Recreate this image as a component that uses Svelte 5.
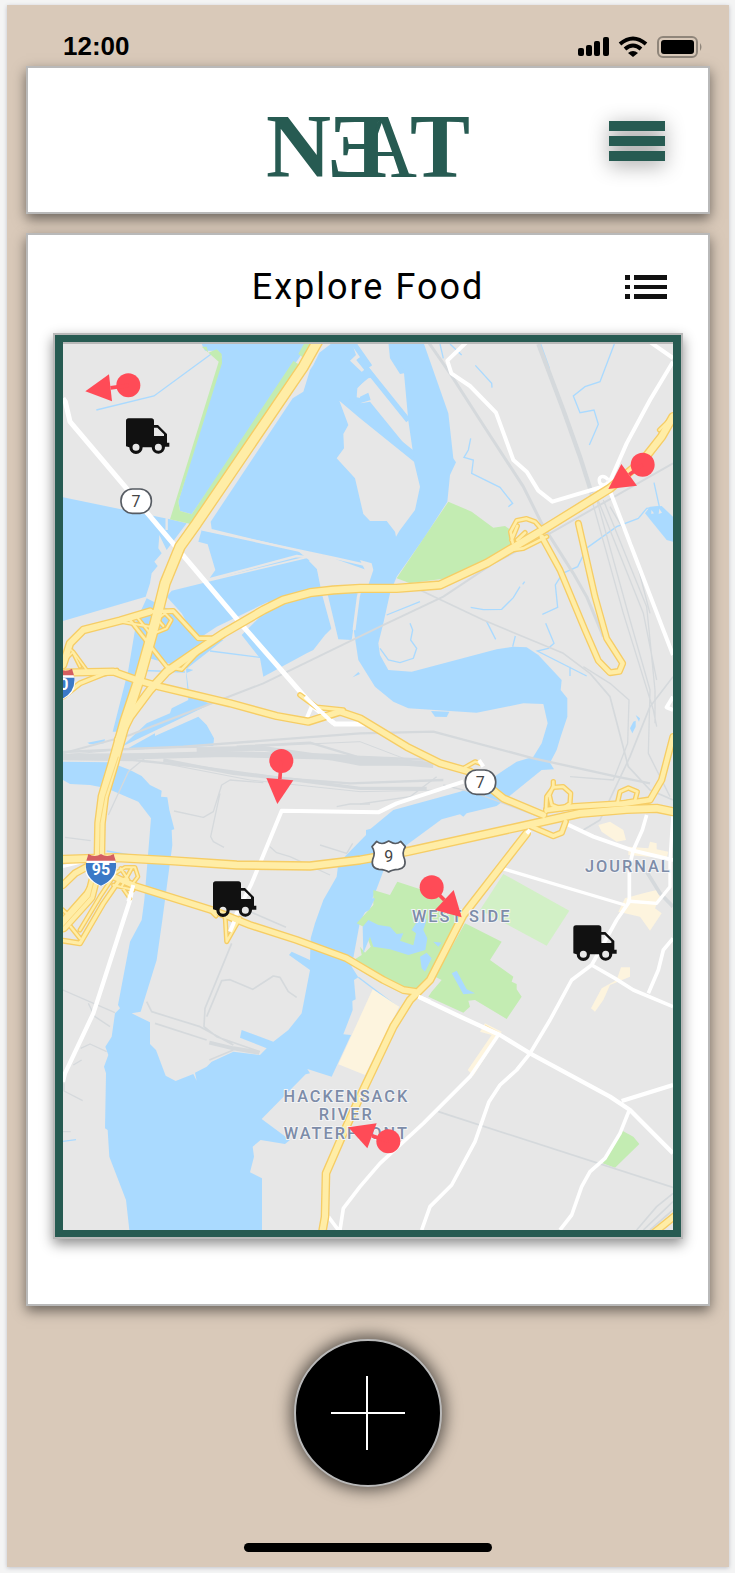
<script>
  const land = '#e7e7e7';

  // Water bodies and creeks
  const water = [
    'M39 502L360 568L410 580L350 660L328 615L325 655L335 670L313 695L323 708L305 730L300 760L287 800L39 873Z',
    'M455 42L465 62L505 62L515 80L385 515L390 543L425 553L780 36Z',
    'M790 105L808 68L850 36L1120 36L1160 150L1195 250L1210 385L1218 397L1200 435L1192 515L1125 620L1040 740L1020 790L1000 880L985 940L990 975L1015 1020L1085 1025L1340 958L1390 950L1430 952L1465 975L1535 1050L1532 1080L1552 1105L1552 1160L1532 1220L1520 1260L1500 1298L1512 1318L1475 1320L1370 1405L1340 1428L1250 1450L1240 1460L1230 1453L1175 1468L1070 1545L1005 1610L975 1690L930 1775L905 1910L925 1942L912 1950L917 2008L907 2013L908 2040L880 2113L903 2115L845 2240L772 2217L780 2230L767 2233L635 2367L720 2430L705 2442L632 2430L608 2450L612 2480L600 2527L636 2545V2700H238L228 2610L178 2480L173 2400L165 2395L168 2230L162 2210L175 2175L166 2150L185 2120L195 2050L210 2035L204 2025L220 1940L240 1835L275 1770L283 1710L303 1465L265 1415L170 1375L120 1365L60 1362L39 1350V1295L180 1297L240 1320L275 1338L300 1365L335 1382L333 1400L352 1402L358 1440L373 1498L365 1500L367 1545L337 1770L320 1890L272 2045L245 2050L300 2077V2142L318 2160L347 2237L377 2253L430 2232L440 2252L435 2228L470 2210L485 2195L550 2165L630 2175L650 2155L570 2123L575 2100L670 2135L715 2100L755 2050L780 1920L717 1875L725 1865L780 1890L782 1825L795 1780L820 1710L860 1640L865 1600L948 1515V1500L962 1496L1030 1440L1230 1385L1310 1355L1400 1295L1450 1280L1475 1240L1493 1180L1480 1122L1420 1120L1280 1148L1075 1135L1030 1115L975 1070L925 990L912 905L922 800L950 720L850 685L485 597L482 575L728 205L760 185L780 120Z',
    'M455 600L740 660L765 680L475 750L496 720L473 643L445 635Z',
    'M350 800L365 782L475 755L770 685L800 708L818 790L850 890L825 915L790 960L770 970L640 1040L630 985L575 915L630 860L655 815L500 890L440 930L395 850Z',
    'M830 780L925 790L905 930L865 928Z',
    'M290 805L260 870L235 1020L188 1205L208 1205L280 980L430 1020L408 1030L415 1110L365 1135L360 1150L290 1180L215 1250L482 1122L418 1095L408 1018L520 930L480 925L430 910L380 850Z',
    'M445 1160L470 1185L492 1225L490 1247L225 1260L315 1210L315 1218Z',
    'M112 1238L165 1228L162 1240L120 1243ZM908 1042L925 1026L930 1032Z',
    'M1143 1143L1198 1145L1190 1161L1155 1160Z',
    'M1785 550L1800 530L1835 528L1869 560V635L1850 630Z',
    'M1740 1195L1750 1175L1757 1172V1190L1747 1210ZM1757 1155L1770 1165L1767 1175Z'
  ];

  const islands = [
    'M868 212L895 285L880 312L882 355L860 385L915 445L940 552L960 573L1010 573L1035 605L1038 620L1048 603L1095 540L1110 470L1092 395L930 265Z',
    'M905 36L918 75L900 92L938 128L948 110L955 140L922 175L920 202L935 205L932 220L960 215L1090 375L1075 272L1062 130L1050 132L1020 85L1015 36Z',
    'M930 690L965 700L970 720L950 780L930 785L945 720Z'
  ];

  const creeks = [
    'M139 240L312 198L500 60', 'M1170 42L1180 85M1200 42L1235 75M1276 106L1325 160L1326 173',
    'M1262 325L1255 360L1242 382L1270 390L1265 430L1350 472L1388 520L1375 530',
    'M1693 42L1650 155L1605 170L1570 198L1590 248L1632 240L1645 283L1618 345',
    'M1472 42L1498 115', 'M1812 458L1828 530L1790 535L1765 565L1700 590L1612 653',
    'M1610 655L1583 710L1538 730L1516 765L1523 832L1477 853',
    'M1262 832L1300 839L1355 838L1390 803L1410 770M1418 763L1424 755',
    'M1010 855L1110 815M1080 880L1088 900L1082 930L1100 955L1090 985L1050 998L1015 990L990 955',
    'M1310 875L1337 928M1396 918L1388 950M1487 880L1512 940L1495 955L1462 963L1610 1038M1560 1010V1038',
    'M480 963L630 982', 'M240 1020L405 1026', 'M170 1563L300 1585', 'M39 2434L78 2429',
    'M925 1942L1042 2030'
  ];

  const parks = [
    'M455 50H470L475 68L500 58L515 72L516 100L385 515L390 543L425 553L730 93L750 105L425 583L360 568L506 95Z',
    'M745 72L765 36H790L758 82Z',
    'M1195 515L1265 545L1330 593L1365 588L1390 605L1395 635L1315 690L1190 745L1080 760L1040 745Z',
    'M970 1680L1020 1695L1042 1655L1180 1700L1240 1755L1145 1950L1095 1990L1050 1985L915 1905L915 1888L935 1875L930 1850L945 1868L962 1850L940 1790L920 1780L970 1725Z',
    'M1245 1780L1355 1835L1320 1890L1390 1940L1385 1955L1400 1962V1978L1415 2000L1370 2067L1275 2010L1255 2012L1260 2030L1240 2048L1135 2000L1145 1985L1175 1950L1155 1940Z',
    'M1717 2402L1750 2420L1768 2442L1695 2513L1658 2500Z'
  ];

  const ponds = [
    'M930 1705H975L958 1740L930 1755ZM938 1790L955 1770L985 1785L1020 1790L1040 1812L1060 1810L1050 1832L1090 1846L1098 1810L1085 1800L1098 1780L1090 1750L1110 1745L1130 1770L1120 1800L1132 1825L1126 1860L1075 1875L1020 1858L970 1850L960 1820L940 1870Z',
    'M1110 1880L1130 1868L1145 1885L1125 1925L1115 1915ZM1150 1835L1175 1838L1165 1850Z',
    'M1205 1930L1220 1922L1250 1978L1275 1990L1240 1993Z'
  ];

  const sands = [
    'M968 1978L1048 2030L945 2235L865 2203Z',
    'M1645 1485L1680 1475L1720 1500L1728 1530L1700 1535L1655 1505Z',
    'M1735 1550L1795 1555L1800 1535L1820 1540V1558L1855 1565L1850 1585L1735 1575Z',
    'M1725 1705L1780 1690L1820 1680L1830 1700L1815 1735L1835 1750L1800 1802L1770 1760L1705 1745Z',
    'M1713 1912H1740V1940L1680 1965L1660 2010L1635 2045L1623 2035L1655 1975L1700 1950Z',
    'M1305 2080L1355 2105L1270 2237L1253 2220L1325 2115L1290 2105Z'
  ];

  const rails = [
    { w: 9, d: 'M1135 36L1200 130L1290 270L1420 470L1475 580L1570 730L1610 800L1660 920' },
    { w: 13, d: 'M1465 42L1540 240L1590 380L1625 490' },
    { w: 6, d: 'M1869 400L1500 610L1330 700L1180 800L990 890L640 1060L240 1215L39 1270' },
    { w: 5, d: 'M1110 780L1300 870L1540 970L1620 1030L1680 1100L1735 1310L1800 1380L1869 1410' },
    { w: 4, d: 'M1620 490L1720 850L1810 1140L1820 1190M1640 500L1780 850L1820 1050M1660 510L1790 830L1815 1080V1180M1635 490L1740 870L1800 1080L1795 1270L1860 1400M1680 530L1745 640L1800 850' },
    { w: 5, d: 'M1869 1040L1800 1130L1740 1280L1650 1470L1600 1500' },
    { w: 4, d: 'M1600 1010L1680 1060L1737 1110L1733 1240L1690 1350L1560 1340' },
    { w: 7, d: 'M39 1266L400 1250L800 1220L930 1210L1150 1205L1450 1285L1700 1340L1800 1360' },
    { w: 18, d: 'M39 1280L300 1278L520 1272L850 1280L1150 1305' },
    { w: 14, d: 'M440 1260L640 1255L850 1285L930 1300L1080 1300' },
    { w: 10, d: 'M340 1290L550 1330L740 1350L930 1375L1130 1375' },
    { w: 7, d: 'M39 1287L250 1290L460 1312L700 1345L900 1360L1180 1350M560 1250L780 1238L920 1280L1150 1290' },
    { w: 3, d: 'M39 1275L250 1255L600 1250L930 1235L1100 1300M340 1300L600 1350L930 1385L1180 1380' },
    { w: 4, d: 'M175 1455L235 1325L290 1280M372 1443L460 1462L490 1445L515 1365L540 1350L640 1358M510 1390L482 1520L490 1535L522 1552M45 1522L122 1532M660 1550L680 1568L720 1580L840 1635M810 1545L890 1570L908 1540M860 1430L900 1422H960' },
    { w: 4, d: 'M1180 1365L1280 1390L1480 1465M930 1422L1080 1400L1160 1340' },
    { w: 5, d: 'M545 1840L465 2035L462 2090L500 2120L630 2165M470 2060L515 1952L540 1949L608 1978L670 1938L690 1942L715 1985L740 2002M290 2015L305 2045L450 2090L550 2145M315 2080L470 2130M478 2190L550 2160M600 1745L708 1792' },
    { w: 12, d: 'M478 2138L550 2155L628 2168' },
    { w: 4, d: 'M39 1980L195 2048M115 2020L135 2060L180 2090M70 2205L95 2190M92 2155L120 2142L170 2165M42 2260V2283L98 2312M39 2405H62' },
    { w: 5, d: 'M1165 2345L1869 2572' },
    { w: 5, d: 'M1869 2590L1820 2630L1760 2700M1869 2615L1780 2700M1869 2640L1800 2700' },
    { w: 11, d: 'M1790 1625L1830 1690L1869 1730' }
  ];

  const streets = [
    { w: 15, d: 'M39 205L46 215L60 275L225 470L580 890L790 1130L855 1182H945' },
    { w: 12, d: 'M770 1165L785 1130' },
    { w: 12, d: 'M555 1760L605 1660L695 1442L985 1447L1040 1420L1240 1355' },
    { w: 13, d: 'M250 1660L240 1710L130 2050L45 2230L39 2255' },
    { w: 12, d: 'M1250 36L1192 92L1204 130L1260 168L1338 248L1390 390L1430 425L1465 482L1507 515L1675 465L1730 340L1800 210L1869 95M1800 36L1869 84' },
    { w: 12, d: 'M1675 470L1840 900L1869 975M1869 1100L1850 1132L1869 1140' },
    { w: 12, d: 'M1550 1482L1630 1520L1750 1562L1869 1590' },
    { w: 11, d: 'M1790 1455L1777 1500L1750 1560L1738 1610V1715L1700 1770L1625 1905L1565 1950L1500 2070L1440 2170L1400 2220L1350 2265L1317 2315L1275 2435L1205 2565L1140 2630L1115 2700' },
    { w: 10, d: 'M1355 1615L1725 1725M1730 1713L1820 1720L1860 1670V1590L1869 1450' },
    { w: 13, d: 'M1105 2000L1220 2055L1350 2115L1440 2170L1680 2300L1740 2340L1869 2470M1715 2313L1869 2265' },
    { w: 11, d: 'M1738 2340L1710 2410L1665 2485L1620 2525L1595 2570L1565 2655L1530 2700' },
    { w: 11, d: 'M1345 2115L1260 2240L1120 2380L990 2500L930 2570L880 2635L870 2700M835 2660L865 2700' },
    { w: 11, d: 'M1625 1905L1695 1945L1750 1980L1869 2030M1795 1990L1825 1920L1840 1860L1869 1825' },
    { w: 10, d: 'M1675 450C1660 432 1645 440 1648 455S1670 465 1675 455' },
    { w: 9, d: 'M39 1022H140M39 1610L100 1595' }
  ];

  const ramps = [
    { w: 26, d: 'M39 1005L60 940L100 900L210 872L300 845' },
    { w: 18, d: 'M300 845L370 843L445 925L500 925' },
    { w: 16, d: 'M240 870L350 1010L395 1018L440 970' },
    { w: 14, d: 'M300 915L350 895L364 870L345 850L322 868L340 888M215 875L300 890L330 840M260 860L300 910' },
    { w: 18, d: 'M39 1100L90 1060L160 1032L200 1022' },
    { w: 13, d: 'M45 990L70 965L110 1020M65 960L90 1010' },
    { w: 24, d: 'M39 1665L75 1630L130 1600' },
    { w: 18, d: 'M39 1832L90 1840L160 1720L205 1655' },
    { w: 20, d: 'M39 1770L110 1690L150 1620' },
    { w: 15, d: 'M62 1790L90 1825M39 1740L55 1755M90 1800L150 1700L190 1640' },
    { w: 14, d: 'M195 1630L225 1612L255 1612L264 1640L245 1665L225 1645L205 1655M212 1615L235 1650M245 1615L215 1670L240 1705M190 1665L250 1680' },
    { w: 15, d: 'M485 1745L498 1758M525 1750L530 1835L570 1765' },
    { w: 17, d: 'M750 1095L800 1132L880 1140' },
    { w: 21, d: 'M1475 620L1530 720L1605 900L1645 992L1680 1028L1708 1024L1718 1000L1670 925L1635 800L1585 580' },
    { w: 16, d: 'M1388 638L1382 605L1400 572L1430 566L1455 575L1475 598M1385 630L1402 588M1402 630L1425 608M1370 662L1420 655L1490 620' },
    { w: 22, d: 'M1869 1220L1835 1350L1800 1410L1730 1420L1570 1430L1490 1440' },
    { w: 16, d: 'M1488 1445L1490 1400L1510 1372L1540 1370L1562 1390L1560 1420L1535 1437L1505 1425L1498 1395L1510 1368V1355M1702 1420L1710 1385L1735 1374L1762 1385L1755 1412L1720 1418' },
    { w: 20, d: 'M1440 1488L1510 1518L1535 1508L1547 1475' },
    { w: 15, d: 'M1240 1315L1275 1295L1290 1300M1828 300L1869 260' }
  ];

  const highways = [
    { w: 28, d: 'M39 1588L200 1583L360 1592L560 1605L780 1608L930 1590L1070 1565L1410 1490L1590 1450L1730 1438L1820 1435L1869 1445' },
    { w: 28, d: 'M205 1230L240 1160L300 1080L350 1025L430 970L520 910L640 840L700 810L780 788L850 780L930 775H1040L1170 765L1310 700L1470 605L1680 475L1780 390L1835 320L1869 260' },
    { w: 25, d: 'M39 1028L190 1025L260 1050L330 1070L540 1120L680 1158L775 1175L870 1145L930 1165L1070 1250L1170 1300L1260 1325L1360 1405L1480 1455' },
    { w: 24, d: 'M190 1640L260 1670L500 1745L600 1785L740 1830L890 1885L1000 1950L1060 1980L1095 1985' },
    { w: 26, d: 'M1430 1510L1360 1600L1240 1755L1140 1950L1080 2010L1030 2090L930 2300L880 2410L828 2530L825 2660L818 2700' },
    { w: 35, d: 'M805 30L760 110L440 580L390 650L345 760L315 880L270 1040L225 1175L190 1300L160 1400L150 1480L148 1590L120 1700L39 1790' },
    { w: 24, d: 'M1890 2645L1810 2710' }
  ];
  const yellow = [...ramps, ...highways];

  const trucks = [[0, 0], [261, 1389], [1342, 1521]];

  const pins = [
    { c: [235, 166], t: [[106, 184], [177, 133], [186, 214]] },
    { c: [1778, 404], t: [[1675, 477], [1714, 402], [1761, 467]] },
    { c: [694, 1293], t: [[682, 1422], [649, 1344], [730, 1351]] },
    { c: [1145, 1672], t: [[1235, 1762], [1211, 1680], [1155, 1740]] },
    { c: [1015, 2434], t: [[895, 2392], [980, 2380], [952, 2455]] }
  ];

  const places = [
    { x: 1735, y: 1626, text: 'JOURNAL' },
    { x: 1235, y: 1777, text: 'WEST SIDE' },
    { x: 889, y: 2315, text: 'HACKENSACK' },
    { x: 889, y: 2370, text: 'RIVER' },
    { x: 889, y: 2426, text: 'WATERFRONT' }
  ];
</script>

<div class="phone">
  <div class="status">
    <time>12:00</time>
    <div class="signals">
      <svg width="32" height="20" viewBox="0 0 32 20" aria-hidden="true">
        <rect x="1" y="11" width="6" height="8" rx="2" /><rect x="9" y="8" width="6" height="11" rx="2" />
        <rect x="17" y="4" width="6" height="15" rx="2" /><rect x="26" y="0" width="6" height="19" rx="2" />
      </svg>
      <svg width="30" height="22" viewBox="0 0 30 22" aria-hidden="true">
        <g fill="none" stroke="#000" stroke-width="4"><path d="M2 8Q15 -3 28 8" /><path d="M7 13Q15 6 23 13" /></g>
        <path d="M10 17Q15 13 20 17L15 21Z" />
      </svg>
      <svg width="46" height="22" viewBox="0 0 46 22" aria-hidden="true">
        <rect x="1" y="1" width="39" height="20" rx="5" fill="none" stroke="#8f857a" stroke-width="2" />
        <rect x="4" y="4" width="33" height="14" rx="3" /><path d="M43 7Q46 11 43 15Z" fill="#8f857a" />
      </svg>
    </div>
  </div>

  <header class="card">
    <svg class="logo" width="200" height="72" viewBox="0 0 200 72">
      <clipPath id="right-half"><rect x="107" y="0" width="60" height="72" /></clipPath>
      <g class="bold"><text x="-2" y="66">N</text><text x="59" y="66">Ǝ</text><text x="142" y="66">T</text></g>
      <text x="84" y="66" clip-path="url(#right-half)">A</text>
    </svg>
    <button class="menu" aria-label="Menu">
      <svg width="56" height="40" viewBox="0 0 56 40"><path d="M0 0H56V10H0ZM0 15H56V25H0ZM0 30H56V40H0Z" /></svg>
    </button>
  </header>

  <main class="card">
    <div class="title">
      <h1>Explore Food</h1>
      <button class="list" aria-label="List view">
        <svg width="42" height="24" viewBox="0 0 42 24"><path d="M0 0H5V5H0ZM9 0H42V5H9ZM0 10H5V14H0ZM9 10H42V14H9ZM0 19H5V24H0ZM9 19H42V24H9Z" /></svg>
      </button>
    </div>

    <div class="frame">
      <svg class="map" viewBox="39 42 1830 2658" aria-label="Food map">
        <rect x="39" y="36" width="1830" height="2664" fill={land} />
        <g fill="#aadaff">{#each water as d}<path {d} />{/each}</g>
        <g fill={land}>{#each islands as d}<path {d} />{/each}</g>
        <g fill="none" stroke="#aadaff">
          <path stroke-width="16" d="M908 36L960 110M925 85L1075 272M895 215L1095 375" />
          <path stroke-width="13" d="M1025 42L1032 80L1055 122" />
          <g stroke-width="4">{#each creeks as d}<path {d} />{/each}</g>
        </g>
        <path fill="#aadaff" d="M930 130L955 110L978 140L955 145L930 165ZM930 200L955 188L962 210L930 220Z" />
        <g fill="none" stroke={land} stroke-width="7">
          <path d="M455 598L740 660L860 685L960 708M470 750L740 678L780 682M350 565V600" />
          <path d="M780 690L805 715L820 790L850 900M945 720L925 800L912 900" stroke-width="9" />
        </g>
        <g fill="#c3ecb2">{#each parks as d}<path {d} />{/each}</g>
        <path fill="#d2f0c6" d="M1360 1632L1558 1742L1490 1847L1290 1740Z" />
        <g fill="#aadaff">{#each ponds as d}<path {d} />{/each}</g>
        <g fill="#fdf4de">{#each sands as d}<path {d} />{/each}</g>
        <path fill="none" stroke="#fbe6b4" stroke-width="3" d="M1305 2085L1350 2110L1265 2230" />
        <path fill={land} d="M1804 540L1812 550L1804 552ZM1828 536L1836 548L1826 552Z" />

        <g fill="none" stroke="#d5d9dc" stroke-linejoin="round">
          {#each rails as r}<path d={r.d} stroke-width={r.w} />{/each}
        </g>
        <g fill="none" stroke="#fff" stroke-linejoin="round">
          {#each streets as r}<path d={r.d} stroke-width={r.w} />{/each}
        </g>
        <g fill="none" stroke="#f6cd65" stroke-linejoin="round" stroke-linecap="round">
          {#each yellow as r}<path d={r.d} stroke-width={r.w} />{/each}
        </g>
        <g fill="none" stroke="#ffeda6" stroke-linejoin="round" stroke-linecap="round">
          {#each yellow as r}<path d={r.d} stroke-width={r.w - 8} />{/each}
        </g>
        <path fill="none" stroke="#f6cd65" stroke-width="2" d="M205 1280L165 1400L150 1480L148 1590L120 1700L39 1790" />
        <path fill="none" stroke="#fff" stroke-width="12" d="M1105 2000L1140 2015M540 1805L553 1775M1430 1510L1440 1500M765 1100L850 1180M250 1665L235 1715M1287 1290L1300 1310" />

        <g class="places">
          {#each places as p}<text x={p.x} y={p.y}>{p.text}</text>{/each}
        </g>

        {#each [[258, 513], [1291, 1356]] as [x, y]}
          <rect x={x - 45} y={y - 36} width="91" height="73" rx="34" fill="#fff" stroke="#565b62" stroke-width="5" />
          <text class="route" {x} y={y + 17}>7</text>
        {/each}
        <g transform="translate(0 7)">
          <path fill="#fff" stroke="#565b62" stroke-width="5" stroke-linejoin="round" d="M980 1527Q994 1539 1010 1529L1016 1526L1022 1529Q1038 1539 1052 1527L1066 1543Q1054 1560 1064 1582Q1070 1607 1045 1611Q1025 1612 1016 1619Q1007 1612 987 1611Q962 1607 968 1582Q978 1560 966 1543Z" />
          <text class="route" x="1016" y="1588">9</text>
        </g>
        {#each [{ x: 153, y: 1580, n: '95' }, { x: 28, y: 1024, n: '80' }] as s}
          <g transform="translate({s.x} {s.y})">
            <path fill="#fff" d="M-40 -2Q-20 8 0 -8Q20 8 40 -2L46 30Q52 68 0 89Q-52 68 -46 30Z" />
            <path fill="#d45e60" d="M-38 -8Q-18 4 0 -8Q18 4 38 -8L44 12H-44Z" />
            <path fill="#3b79c7" d="M-45 19H45Q49 66 0 87Q-49 66 -45 19Z" />
            <text class="interstate" x="0" y="56">{s.n}</text>
          </g>
        {/each}

        {#each trucks as [x, y]}
          <path transform="translate({x} {y})" fill="#111" fill-rule="evenodd" d="M236 265H304Q312 265 312 273V285H324L351 312V338H358V350H345A20 20 0 0 1 305 352H278A20 20 0 0 1 238 352L228 349V273Q228 265 236 265ZM312 293V318H342V313L322 293ZM258 341A10 10 0 1 0 258 362A10 10 0 1 0 258 341ZM325 341A10 10 0 1 0 325 362A10 10 0 1 0 325 341Z" />
        {/each}

        <g fill="#ff4b57" stroke="#ff4b57">
          {#each pins as p}
            <circle cx={p.c[0]} cy={p.c[1]} r="36" stroke="none" />
            <line x1={p.c[0]} y1={p.c[1]} x2={(p.t[1][0] + p.t[2][0]) / 2} y2={(p.t[1][1] + p.t[2][1]) / 2} stroke-width="11" />
            <polygon points={p.t.map((q) => q.join(',')).join(' ')} stroke="none" />
          {/each}
        </g>
      </svg>
    </div>
  </main>

  <button class="add" aria-label="Add">
    <svg width="74" height="74" viewBox="0 0 74 74"><path d="M0 37H74M36 0V74" stroke="#fff" stroke-width="2" /></svg>
  </button>
  <div class="home"></div>
</div>

<style>
  :global(body) { background: #f4f4f4; }
  .phone {
    box-sizing: border-box;
    display: flex;
    flex-direction: column;
    margin: 5px 6px 6px 7px;
    padding: 0 19px 15px;
    background: #d9c9b9;
    box-shadow: 0 1px 4px #bfc2c9;
    font-family: Roboto, sans-serif;
  }
  .status {
    display: flex;
    justify-content: space-between;
    align-items: center;
    height: 61px;
    padding: 22px 7px 0 37px;
    box-sizing: border-box;
  }
  time { font: bold 26px "Liberation Sans", sans-serif; }
  .signals { display: flex; align-items: center; gap: 9px; }
  svg { display: block; }
  .card {
    background: #fff;
    border: 2px solid #b9b9b9;
    box-shadow: 0 5px 12px rgba(0, 0, 0, 0.5);
  }
  header {
    display: grid;
    grid-template-columns: 1fr auto 1fr;
    align-items: center;
    height: 144px;
  }
  .logo {
    grid-column: 2;
    margin-top: 14px;
    overflow: visible;
    font: 90px "Liberation Serif", serif;
    fill: #275b52;
  }
  .logo .bold { font-weight: bold; }
  button { padding: 0; border: 0; background: none; cursor: pointer; }
  .menu {
    justify-self: end;
    margin: 2px 43px 0 0;
    fill: #275b52;
  }
  .menu svg { overflow: visible; filter: drop-shadow(0 4px 10px rgba(0, 0, 0, 0.4)); }
  main { margin-top: 19px; padding-bottom: 65px; }
  .title {
    display: grid;
    grid-template-columns: 1fr auto 1fr;
    align-items: center;
    height: 98px;
    padding: 6px 41px 0;
    box-sizing: border-box;
  }
  h1 {
    grid-column: 2;
    margin: 0;
    font-size: 36px;
    font-weight: 400;
    line-height: 44px;
    letter-spacing: 2px;
  }
  .list { justify-self: end; fill: #111; }
  .frame {
    margin: 0 25px;
    padding: 7px 8px;
    background: #275b52;
    border: 2px solid #b9b9b9;
    box-shadow: 0 5px 12px rgba(0, 0, 0, 0.45);
  }
  .map { width: 100%; height: auto; border-top: 2px solid #b9b9b9; }
  text { font-family: inherit; }
  .places text {
    font-size: 49px;
    font-weight: 500;
    letter-spacing: 6px;
    text-anchor: middle;
    fill: #7d8ca8;
    stroke: #f3f4f6;
    stroke-width: 6px;
    paint-order: stroke;
  }
  .route { font-size: 48px; text-anchor: middle; fill: #444; }
  .interstate { font-size: 48px; font-weight: 700; text-anchor: middle; fill: #fff; }
  .add {
    display: grid;
    place-items: center;
    align-self: center;
    width: 148px;
    height: 148px;
    margin-top: 33px;
    box-sizing: border-box;
    border: 2px solid #b9b9b9;
    border-radius: 50%;
    background: #000;
    box-shadow: 0 0 16px 3px rgba(0, 0, 0, 0.6);
  }
  .home {
    align-self: center;
    width: 248px;
    height: 9px;
    margin-top: 56px;
    border-radius: 5px;
    background: #000;
  }
</style>
